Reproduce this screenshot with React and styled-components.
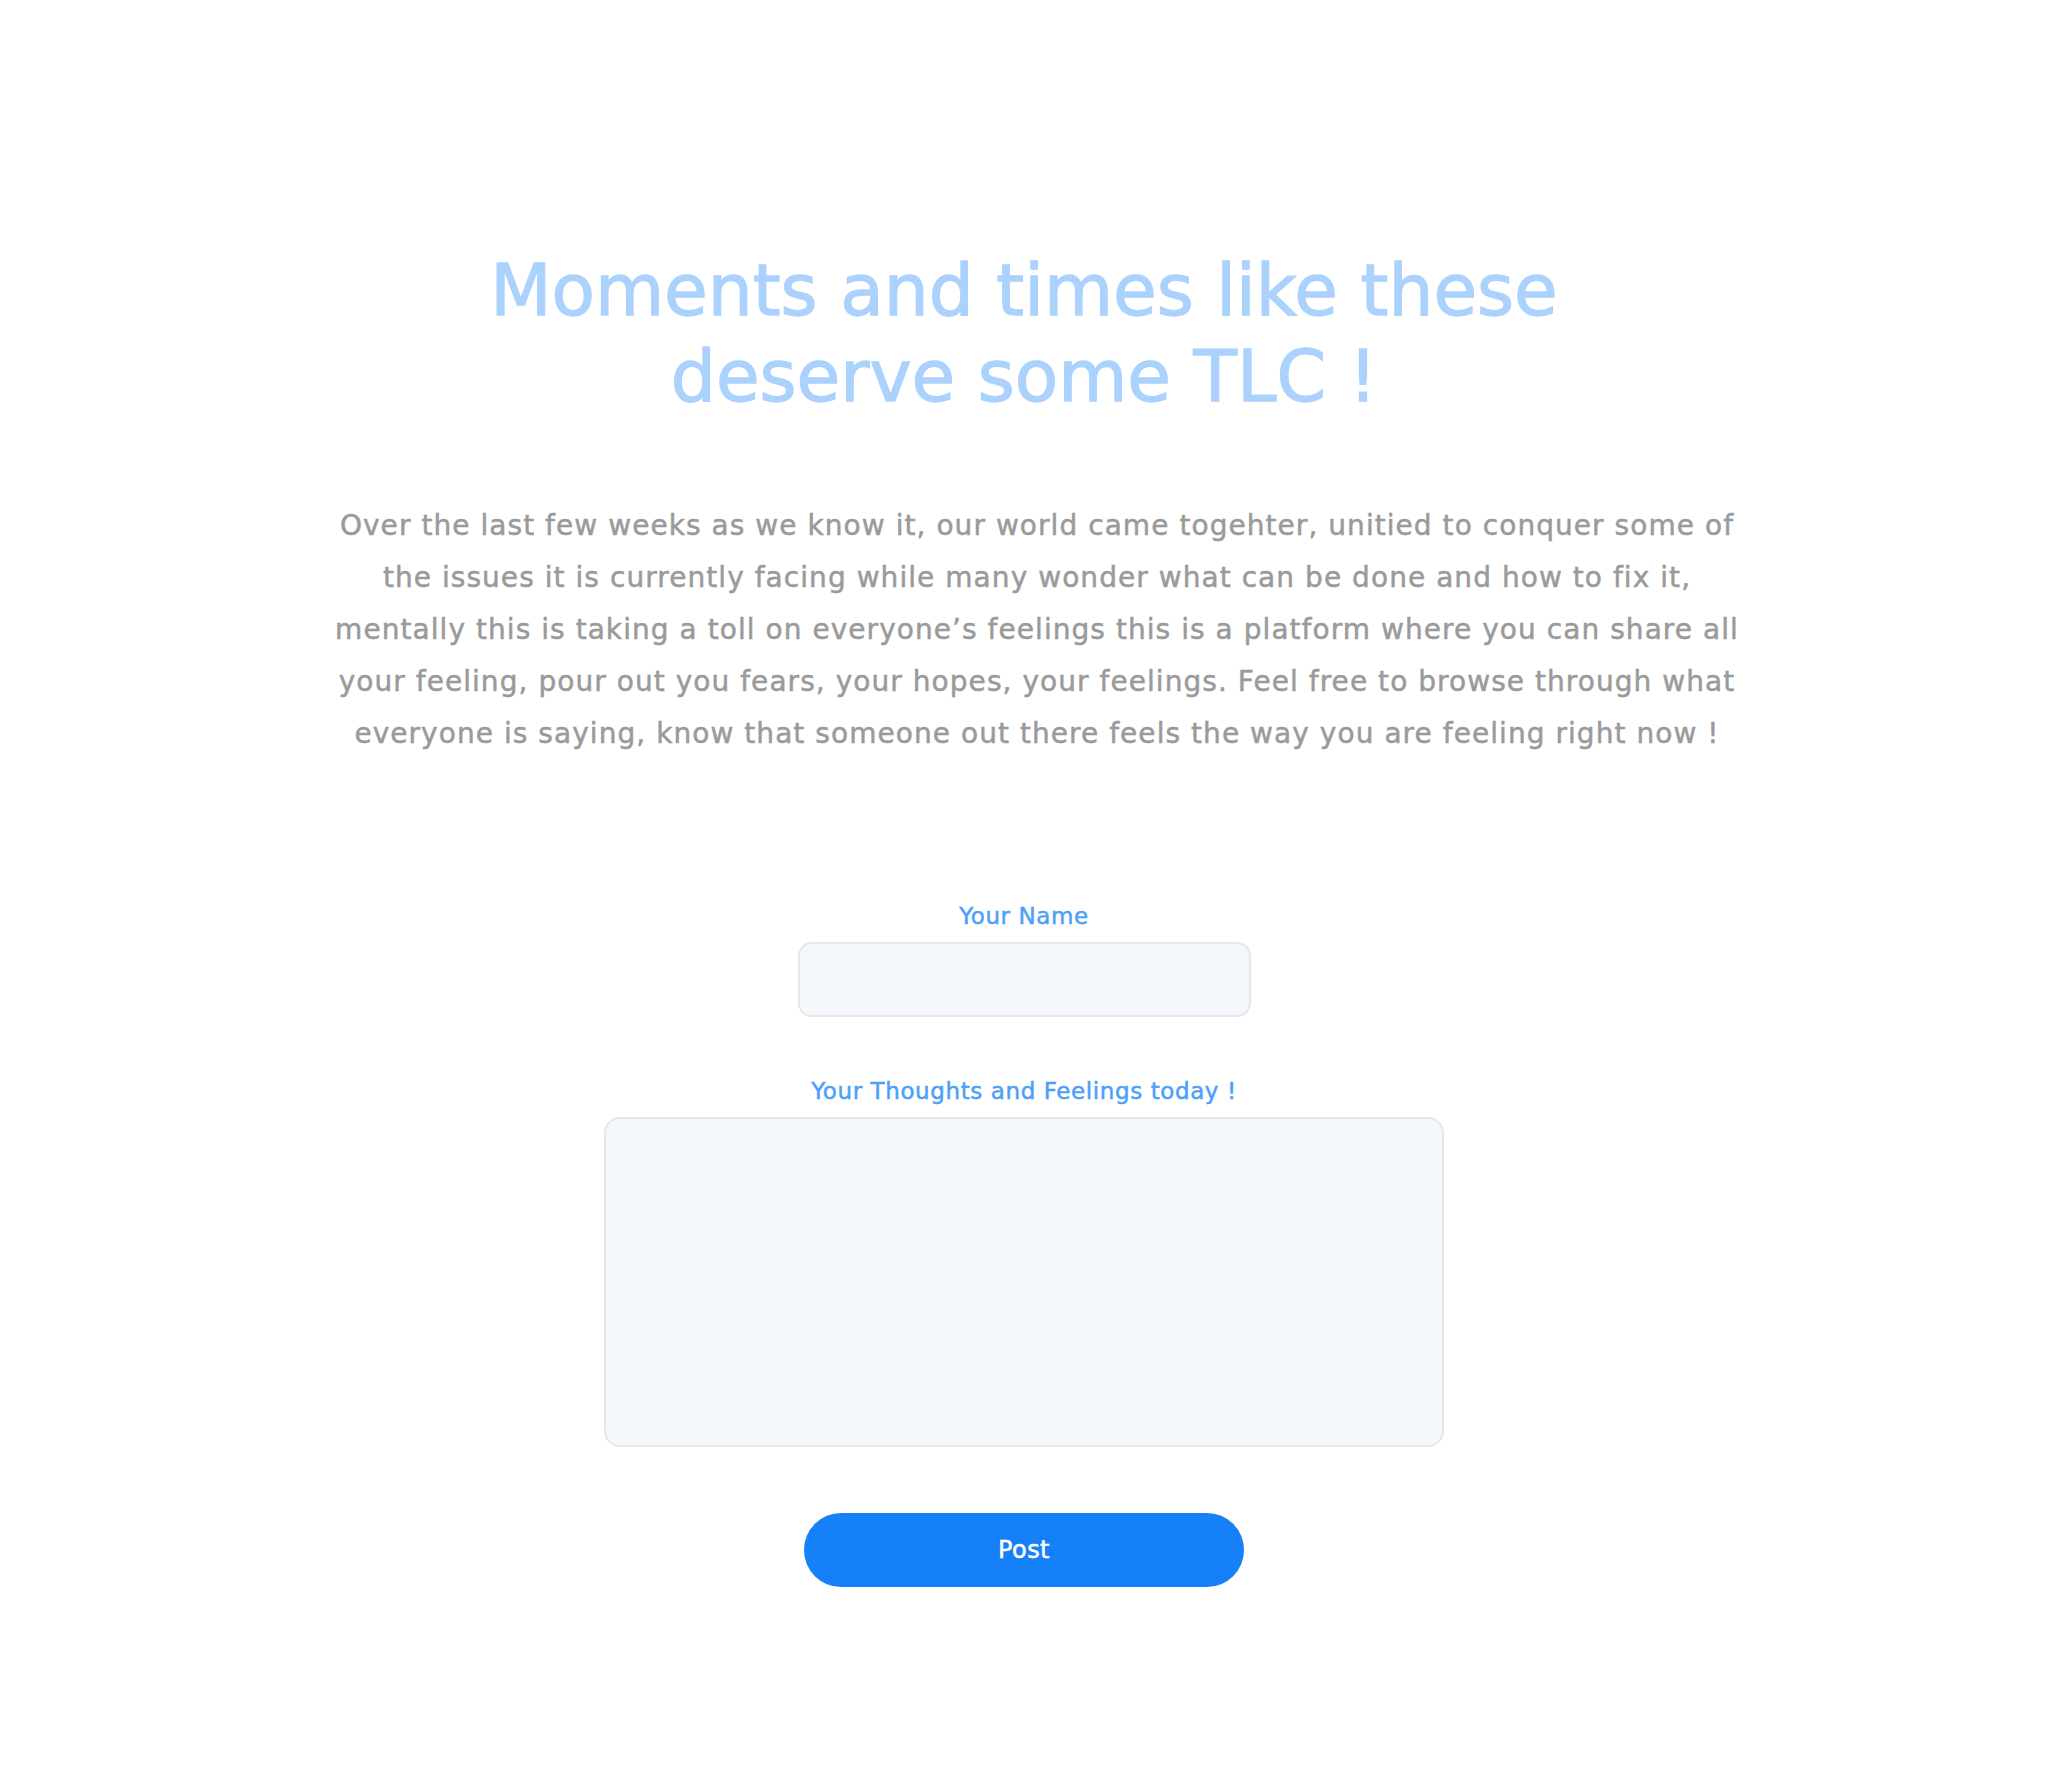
import styled, { createGlobalStyle } from 'styled-components'

const GlobalStyle = createGlobalStyle`
  html, body {
    margin: 0;
    padding: 0;
    background: #ffffff;
  }
  body {
    font-family: "DejaVu Sans", Lato, Arial, sans-serif;
  }
`

const Page = styled.div`
  display: flex;
  flex-direction: column;
  align-items: center;
  padding: 248px 0 200px;
  min-height: 1786px;
  box-sizing: border-box;
`

const Title = styled.h1`
  margin: 0;
  font-size: 71px;
  line-height: 86px;
  font-weight: 400;
  color: #abd2fd;
  -webkit-text-stroke: 1.3px #abd2fd;
  text-align: center;
`

const Intro = styled.p`
  margin: 80px 0 0;
  width: 1500px;
  padding-left: 26px;
  font-size: 28px;
  line-height: 52px;
  font-weight: 400;
  color: #9a9a9a;
  -webkit-text-stroke: 0.5px #9a9a9a;
  letter-spacing: 1.05px;
  text-align: center;
`

const Form = styled.form`
  display: flex;
  flex-direction: column;
  align-items: center;
  margin-top: 142px;
`

const Label = styled.label`
  display: block;
  font-size: 23px;
  line-height: 28px;
  font-weight: 400;
  color: #4d9ffa;
  -webkit-text-stroke: 0.5px #4d9ffa;
  letter-spacing: 0.6px;
  margin-top: ${(p) => (p.$spaced ? '60px' : '0')};
  margin-bottom: 12px;
`

const Field = styled.input`
  width: ${(p) => p.$width}px;
  height: 75px;
  box-sizing: border-box;
  border: 2px solid #e6e7e9;
  border-radius: 14px;
  background: #f4f8fc;
  outline: none;
  padding: 0 20px;
  font-size: 22px;
`

const Area = styled.textarea`
  width: 840px;
  height: 330px;
  box-sizing: border-box;
  border: 2px solid #e6e7e9;
  border-radius: 16px;
  background: #f4f8fc;
  outline: none;
  resize: none;
  padding: 20px;
  font-size: 22px;
  font-family: inherit;
`

const PostButton = styled.button`
  margin-top: 66px;
  width: 440px;
  height: 74px;
  border: none;
  border-radius: 37px;
  background: #1580f8;
  color: #ffffff;
  font-family: inherit;
  font-size: 24px;
  font-weight: 400;
  -webkit-text-stroke: 0.5px #ffffff;
  letter-spacing: 0.4px;
  cursor: pointer;
`

export default function App() {
  return (
    <>
      <GlobalStyle />
      <Page>
        <Title>
          Moments and times like these
          <br />
          deserve some TLC !
        </Title>
        <Intro>
          Over the last few weeks as we know it, our world came togehter, unitied to conquer some of
          <br />
          the issues it is currently facing while many wonder what can be done and how to fix it,
          <br />
          mentally this is taking a toll on everyone’s feelings this is a platform where you can share all
          <br />
          your feeling, pour out you fears, your hopes, your feelings. Feel free to browse through what
          <br />
          everyone is saying, know that someone out there feels the way you are feeling right now !
        </Intro>
        <Form onSubmit={(e) => e.preventDefault()}>
          <Label htmlFor="name">Your Name</Label>
          <Field id="name" type="text" $width={453} />
          <Label htmlFor="thoughts" $spaced>Your Thoughts and Feelings today !</Label>
          <Area id="thoughts" />
          <PostButton type="submit">Post</PostButton>
        </Form>
      </Page>
    </>
  )
}
